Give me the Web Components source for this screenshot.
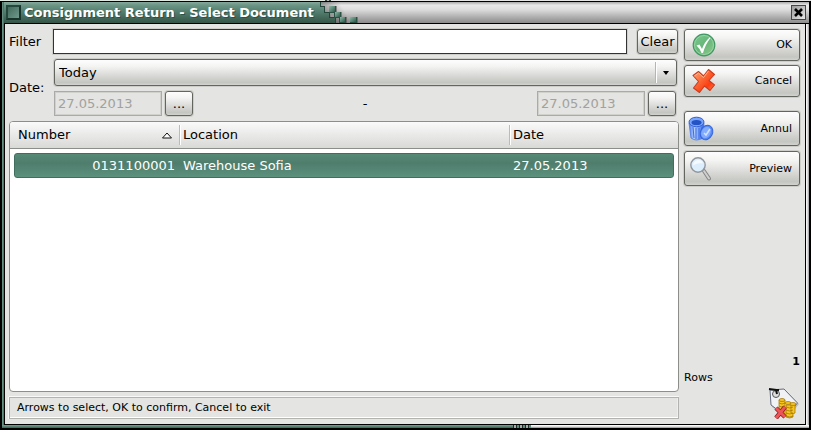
<!DOCTYPE html>
<html lang="en">
<head>
<meta charset="utf-8">
<title>Consignment Return - Select Document</title>
<style>
  body { margin: 0; background: #fff; font: 13px/16px "DejaVu Sans", sans-serif; color: #000; }
</style>
</head>
<body>
<document-dialog></document-dialog>
<script>
const define = (name, html, setup) => {
  const template = document.createElement('template');
  template.innerHTML = html;
  customElements.define(name, class extends HTMLElement {
    constructor() {
      super();
      this.attachShadow({ mode: 'open' }).append(template.content.cloneNode(true));
      if (setup) setup(this, this.shadowRoot);
    }
  });
};

const face = `border: 1px solid #63655f; border-radius: 3px; box-shadow: 0 0 0 1px #cdcdca;
  background: linear-gradient(#fdfdfd, #f4f4f3 25%, #dededc 55%, #c4c6c1 90%, #d2d3d0); color: #000;`;

define('title-bar', `
<style>
  :host { display: flex; height: 21px; border-bottom: 1px solid #000; background: linear-gradient(#a9a9a9, #e9e9e9 15%, #dedede 35%, #8b8b8b); }
  .tab { display: flex; align-items: center; gap: 3px; width: 315px; padding-left: 2px; box-sizing: border-box; background: linear-gradient(#86aa9d, #6b9585 15%, #547f70 45%, #345548); }
  .menu { width: 15px; height: 15px; padding: 0; box-sizing: border-box; border: 2px solid; border-color: #24483b #17332a #17332a #24483b; background: linear-gradient(135deg, #42695c, #6f9a8a); }
  h1 { margin: 0; font: bold 13px/16px "DejaVu Sans", sans-serif; color: #fff; white-space: nowrap; text-shadow: 1px 1px #2d5143; }
  svg { display: block; flex: none; }
  .close { margin: 3px 3px 0 auto; width: 15px; height: 15px; padding: 0; border: 1px solid #444; background: linear-gradient(135deg, #999, #e8e8e8); display: grid; place-items: center; }
</style>
<div class="tab"><button class="menu" aria-label="Window menu"></button><h1><slot></slot></h1></div>
<svg width="45" height="21" viewBox="0 0 45 21" shape-rendering="crispEdges" aria-hidden="true">
  <defs>
    <linearGradient id="g" gradientUnits="userSpaceOnUse" x1="0" y1="0" x2="0" y2="21"><stop offset="0" stop-color="#86aa9d"/><stop offset=".15" stop-color="#6b9585"/><stop offset=".45" stop-color="#547f70"/><stop offset="1" stop-color="#345548"/></linearGradient>
    <linearGradient id="s" gradientUnits="userSpaceOnUse" x1="4" y1="18" x2="24" y2="6"><stop offset="0" stop-color="#333" stop-opacity=".55"/><stop offset="1" stop-color="#333" stop-opacity="0"/></linearGradient>
    <linearGradient id="q" x1="0" y1="0" x2="1" y2="1"><stop offset="0" stop-color="#8db5a5"/><stop offset=".5" stop-color="#5c8a79"/><stop offset="1" stop-color="#30564a"/></linearGradient>
  </defs>
  <path d="M0 0H45V21H0Z" fill="url(#s)"/>
  <path d="M0 0H1V5H6V11H11V16H17V21H0Z" fill="url(#g)"/>
  <path d="M1 0H2V5H1ZM1 4H6V5H1ZM5 5H6V11H5ZM5 10H11V11H5ZM10 11H11V16H10ZM10 15H17V16H10ZM16 16H17V21H16Z" fill="#24463a"/>
  <path d="M17 4H18V11H11V10H17ZM22 10H23V16H17V15H22ZM27 15H28V21H27ZM38 15H39V21H38Z" fill="#444" opacity=".5"/>
  <g fill="#2b5044"><path d="M10 4h7v7h-7zM15 10h7v6h-7zM20 15h7v6h-7zM31 15h7v6h-7z"/></g>
  <g fill="url(#q)"><path d="M10 4h6v6h-6z"/><path d="M16 10h5v5h-5z"/><path d="M21 15h5v5h-5z"/><path d="M31 15h6v5h-6z"/></g>
  <path d="M12 12h3v3h-3z" fill="#999"/>
</svg>
<button class="close" aria-label="Close"><svg width="9" height="9" viewBox="0 0 9 9"><path d="M1 1L8 8M8 1L1 8" stroke="#000" stroke-width="2.600"/></svg></button>
`);

define('action-button', `
<style>
  :host { display: block; }
  button { ${face} display: flex; align-items: center; justify-content: space-between; width: 100%; height: 100%; padding: 0 7px 0 5px; font: 11px/14px "DejaVu Sans", sans-serif; }
  ::slotted(svg) { display: block; }
</style>
<button type="button"><slot name="icon"></slot><span><slot></slot></span></button>`);

define('document-filter', `
<style>
  :host { display: grid; grid-template-columns: 45px 1fr; grid-template-rows: 25px 27px 25px; row-gap: 5px; align-items: center; }
  input, select, button { box-sizing: border-box; font: 13px/16px "DejaVu Sans", sans-serif; margin: 0; height: 25px; }
  .line { display: flex; align-items: center; justify-content: space-between; margin-right: 1px; }
  #q { flex: 1; min-width: 0; margin-left: -1px; border: 1px solid #333; box-shadow: 0 0 0 1px #cfcfcc; background: #fff; margin-right: 10px; }
  button { ${face} padding: 0; }
  .clear { width: 41px; }
  .date { grid-row: 2 / 4; }
  .pick { position: relative; margin-right: 2px; height: 27px; }
  select { ${face} appearance: none; width: 100%; height: 27px; padding: 0 24px 0 4px; }
  .pick::after { content: ""; position: absolute; right: 8px; top: 12px; border: 3px solid transparent; border-top: 4px solid #000; border-bottom: 0; pointer-events: none; }
  .pick::before { content: ""; position: absolute; right: 20px; top: 3px; bottom: 3px; width: 1px; background: #b5b5b2; border-right: 1px solid #fff; pointer-events: none; }
  .range { margin-right: 3px; }
  .group { display: flex; gap: 3px; }
  .group input { width: 108px; border: 1px solid #aaaaa6; box-shadow: inset 0 0 0 1px #d0d0cd; background: #e4e4e2; color: #a1a19e; padding: 0 3px; }
  .group button { width: 28px; }
</style>
<label for="q">Filter</label>
<div class="line"><input id="q" type="text"><button class="clear" type="button">Clear</button></div>
<label class="date" for="period">Date:</label>
<div class="pick"><select id="period"><option>Today</option></select></div>
<div class="line range">
  <div class="group"><input aria-label="From date" value="27.05.2013" disabled><button type="button" aria-label="Choose from date">...</button></div>
  <span>-</span>
  <div class="group"><input aria-label="To date" value="27.05.2013" disabled><button type="button" aria-label="Choose to date">...</button></div>
</div>`);

define('document-table', `
<style>
  :host { display: block; border: 1px solid #8c8e89; border-radius: 4px; background: #fff; overflow: hidden; }
  table, thead, tbody { display: block; }
  tr { display: grid; grid-template-columns: 170px 1fr 168px; }
  thead { background: linear-gradient(#fafafa, #e9e9e8 50%, #d9d9d7); border-bottom: 1px solid #8c8e89; }
  th { display: flex; align-items: center; justify-content: space-between; height: 26px; box-sizing: border-box; padding: 0 7px 0 3px; font-weight: normal; position: relative; }
  th:first-child { padding-left: 8px; }
  th + th::before { content: ""; position: absolute; left: -1px; top: 3px; bottom: 3px; width: 1px; background: #bbb; border-right: 1px solid #fff; }
  tbody { padding: 4px; }
  tbody tr { grid-template-columns: 166px 1fr 164px; border: 1px solid #416e5f; border-radius: 3px; box-sizing: border-box; height: 25px; align-items: center; background: linear-gradient(#568a77, #4f7d6d 40%, #5b917d); color: #fff; }
  td { padding: 0 2px; }
  td:first-child { text-align: right; padding-right: 6px; }
  td:last-child { padding-left: 4px; }
</style>
<table>
  <thead><tr><th scope="col" aria-sort="ascending">Number<svg width="12" height="7" viewBox="0 0 12 7" aria-hidden="true"><path d="M1.500 6L6 1L10.500 6Z" fill="#fff" stroke="#111"/></svg></th><th scope="col">Location</th><th scope="col">Date</th></tr></thead>
  <tbody><tr aria-selected="true"><td>0131100001</td><td>Warehouse Sofia</td><td>27.05.2013</td></tr></tbody>
</table>`);

define('status-bar', `
<style>:host { display: block; box-sizing: border-box; height: 22px; padding: 3px 7px; border: 1px solid #b2b2af; box-shadow: inset 0 -1px #fff, inset -1px 0 #eee, 0 -1px #f8f8f8, -1px 0 #f8f8f8; font: 11px/14px "DejaVu Sans", sans-serif; }</style><slot></slot>`);

define('row-counter', `
<style>
  :host { display: grid; font: 11px/14px "DejaVu Sans", sans-serif; row-gap: 2px; }
  output { justify-self: end; font-weight: bold; }
  svg { justify-self: end; }
</style>
<output id="n" aria-label="Rows">1</output>
<span>Rows</span>
<svg width="32" height="32" viewBox="0 0 32 32" aria-hidden="true">
  <path d="M3 4L17 3L31 17L20 31L4 20Z" fill="#777" opacity=".35"/>
  <path d="M2 3L16 2L29.500 16L18 29L3 18Z" fill="#f1f2f5" stroke="#656b7c"/>
  <circle cx="8" cy="7" r="3.500" fill="#ddd" stroke="#555"/>
  <path d="M1 2L8 3L9 7M7 3L11 3" fill="none" stroke="#111" stroke-width="2"/>
  <g fill="#f7c51d" stroke="#9c7007" stroke-width=".7">
    <path d="M11 13v15q3 2 6 0V13z"/><path d="M18 18v12q4 2 7 0V18z"/><path d="M23 17v9q3 1 4 0V17z"/>
    <ellipse cx="14" cy="13" rx="3" ry="1.500"/><ellipse cx="20" cy="16" rx="3" ry="1.500"/><ellipse cx="25" cy="17" rx="3" ry="1.500"/>
    <path d="M11 16q3 2 6 0M11 19q3 2 6 0M18 20q4 2 7 0M18 23q4 2 7 0M18 26q4 2 7 0M18 29q4 2 7 0" fill="none"/>
  </g>
  <path d="M8 21L17 30M17 20L8 31" stroke="#8c1d20" stroke-width="4.500"/>
  <path d="M8 21L17 30M17 20L8 31" stroke="#ee5558" stroke-width="3"/>
</svg>`);

define('document-dialog', `
<style>
  :host { display: block; box-sizing: border-box; min-height: 100vh; padding: 0 2px 2px 0; }
  .frame { min-height: calc(100vh - 2px); box-sizing: border-box; display: grid; grid-template: 2px 22px 1fr 1px 3px 2px / 2px 2px 1fr 3px 2px; background: #000; }
  .sky { grid-area: 1 / 1 / 2 / 6; height: 1px; background: linear-gradient(90deg, #dfe9e2 325px, #3c4a44 325px 327px, #bbb 327px 329px, #3c4a44 329px 331px, #e6e6e6 331px); }
  .left { grid-area: 2 / 2 / 6 / 3; background: linear-gradient(90deg, #6f9c8c, #43695c); }
  title-bar { grid-area: 2 / 3 / 3 / 6; margin-right: 2px; }
  .right { grid-area: 3 / 4 / 6 / 5; background: linear-gradient(90deg, #fff, #d8d4d8 60%, #99969a); }
  .bottom { grid-area: 5 / 2 / 6 / 5; display: flex; }
  .bottom i:nth-child(1) { width: 511px; background: linear-gradient(#77a393, #3c6154); }
  .bottom i:nth-child(2) { width: 18px; background: repeating-linear-gradient(90deg, #172e26 0 1px, #a9aaa9 1px 3px, #172e26 3px 4px, #5f8e7d 4px 6px); }
  .bottom i:nth-child(3) { flex: 1; background: linear-gradient(#fff, #eee 40%, #8c8a8d); }
  main { grid-area: 3 / 3 / 4 / 4; border-left: 1px solid #000; border-right: 1px solid #000; background: #e4e4e2; display: grid; grid-template-columns: 1fr 116px; column-gap: 5px; padding: 5px 5px 5px 4px; }
  .work { display: flex; flex-direction: column; gap: 5px; min-width: 0; }
  document-table { flex: 1; }
  aside { display: flex; flex-direction: column; gap: 4px; }
  action-button { height: 32px; }
  .tall { height: 35px; }
  .apart { margin: 10px 0 1px; }
  row-counter { margin-top: auto; }
</style>
<div class="frame">
  <div class="sky"></div><div class="left"></div>
  <title-bar>Consignment Return - Select Document</title-bar>
  <main>
    <section class="work">
      <document-filter></document-filter>
      <document-table></document-table>
      <status-bar>Arrows to select, OK to confirm, Cancel to exit</status-bar>
    </section>
    <aside>
      <action-button>
        <svg slot="icon" width="26" height="26" viewBox="0 0 26 26" aria-hidden="true">
          <defs><linearGradient id="ok" x1="0" y1="0" x2="1" y2="1"><stop offset="0" stop-color="#7dc88e"/><stop offset=".5" stop-color="#66b77a"/><stop offset="1" stop-color="#94c88c"/></linearGradient></defs>
          <circle cx="14" cy="13" r="10.800" fill="url(#ok)" stroke="#429765" stroke-width="1.200"/>
          <circle cx="14" cy="13" r="9.500" fill="none" stroke="#9ed9aa" stroke-width=".8"/>
          <path d="M6.500 13.500L9.500 12.500L12 17Q14.500 10 19.500 5.500L20.500 6Q15.500 12 13 21L11.500 21Q9.500 16 6.500 13.500Z" fill="#fff"/>
        </svg>OK</action-button>
      <action-button>
        <svg slot="icon" width="26" height="26" viewBox="0 0 26 26" aria-hidden="true">
          <defs><linearGradient id="no" x1="0" y1="0" x2="1" y2="1"><stop offset="0" stop-color="#ffac7b"/><stop offset=".45" stop-color="#fa6432"/><stop offset=".7" stop-color="#ff3c12"/><stop offset="1" stop-color="#ff8a4f"/></linearGradient></defs>
          <path d="M3 7.500L8.500 3.500L13.500 8L18.500 1.500L24.500 6.500L19 12.500L24.500 17L20 22.500L14.500 18L9.500 24.500L3.500 20L8.500 13.500Z" fill="url(#no)" stroke="#c93c20" stroke-width="1.100" stroke-linejoin="round"/>
          <path d="M4.500 8L8.500 5L13.500 9.500L18.500 3" fill="none" stroke="#ffc2a0" stroke-width=".8"/>
        </svg>Cancel</action-button>
      <action-button class="tall apart">
        <svg slot="icon" width="26" height="26" viewBox="2 0 26 26" aria-hidden="true" overflow="visible">
          <defs><linearGradient id="bin" x2="1"><stop offset="0" stop-color="#4d7df2"/><stop offset=".35" stop-color="#b5d0ff"/><stop offset=".7" stop-color="#6d9cfa"/><stop offset="1" stop-color="#3667df"/></linearGradient></defs>
          <path d="M1 7L3 22Q8 26 15 22L16 7Z" fill="url(#bin)" stroke="#4a76df" stroke-width=".8"/>
          <path d="M5 11L6 22M8 12V23M11 12V23M14 11L13 21" stroke="#3e6bdd" stroke-width="1"/>
          <ellipse cx="8.500" cy="6" rx="7.500" ry="4.800" fill="#79a4fb" stroke="#3560d3"/>
          <ellipse cx="8.500" cy="6.500" rx="5" ry="2.600" fill="#2453c6"/>
          <ellipse cx="18.500" cy="16.500" rx="6" ry="7.500" transform="rotate(28 18.500 16.500)" fill="#5689f8" stroke="#3664d9"/>
          <ellipse cx="18" cy="16.500" rx="4.500" ry="6" transform="rotate(28 18 16.500)" fill="#82acff"/>
          <path d="M16 17L18 19L22 13" fill="none" stroke="#d3e3ff" stroke-width="1.500"/>
        </svg>Annul</action-button>
      <action-button class="tall">
        <svg slot="icon" width="26" height="26" viewBox="0 0 26 26" aria-hidden="true">
          <path d="M14 15L19 22.500" stroke="#858585" stroke-width="4" stroke-linecap="round"/>
          <path d="M14 15L19 22.500" stroke="#d0d0d0" stroke-width="2" stroke-linecap="round"/>
          <circle cx="8" cy="9" r="7.200" fill="#dcedfb" stroke="#8f969b" stroke-width="1.400"/>
          <path d="M3 9.500Q3 4.500 8 4Q12 3.500 13 7.500Q8 6.500 3 9.500Z" fill="#fff" opacity=".7"/>
        </svg>Preview</action-button>
      <row-counter></row-counter>
    </aside>
  </main>
  <div class="right"></div>
  <div class="bottom"><i></i><i></i><i></i></div>
</div>`);
</script>
</body>
</html>
